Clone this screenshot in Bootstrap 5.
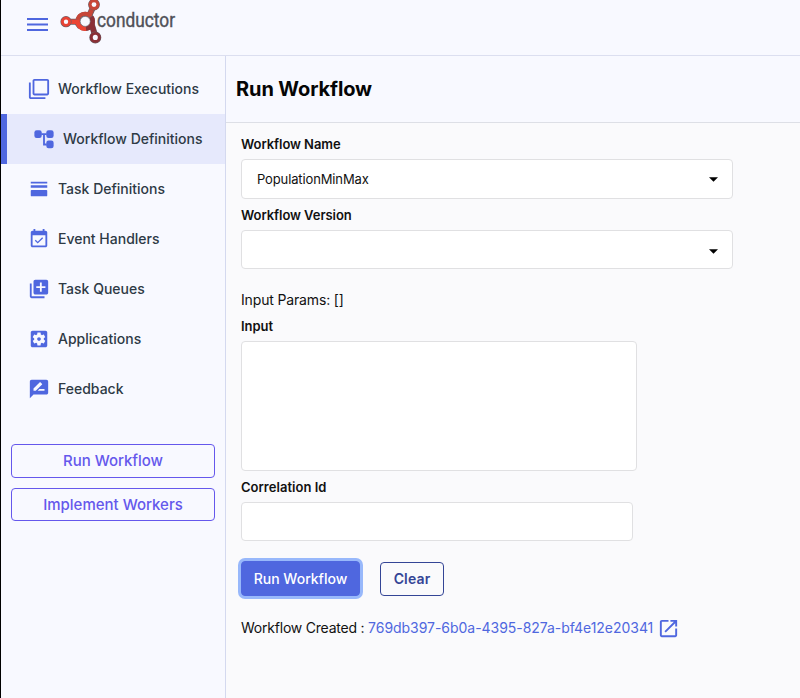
<!DOCTYPE html>
<html lang="en">
<head>
<meta charset="utf-8">
<meta name="viewport" content="width=device-width, initial-scale=1">
<title>Conductor - Run Workflow</title>
<link href="https://cdn.jsdelivr.net/npm/bootstrap@5.3.0/dist/css/bootstrap.min.css" rel="stylesheet">
<style>
body{font-family:Inter,"Liberation Sans",sans-serif;font-size:14px;line-height:20px;color:#111;background:#fafafc;height:698px;border-left:1px solid #000;overflow:hidden}
.topbar{height:56px;background:#f8f9ff;border-bottom:1px solid #dcdff0}
.menu-btn{width:22px;height:16px;margin:1px 11px 0 26px}
.brand-logo{width:120px;height:55px;overflow:visible}
.side{width:225px;background:#f8f9ff;border-right:1px solid #d4d9ef;padding-top:8px}
.side .nav-link{height:50px;padding:0 0 0 27px;gap:8px;color:#2e3a45;font-weight:500;font-size:14px;white-space:nowrap;letter-spacing:0}
.side .nav-link svg{width:22px;height:22px;fill:#4f67df;flex:none}
.side .nav-link.active{background:#e6e9fc;border-left:6px solid #4f67df;padding-left:26px}
.side-actions{padding:30px 10px 0;gap:10px}
.side-btn{--bs-btn-color:#6558ec;--bs-btn-border-color:#6558ec;--bs-btn-padding-y:0;height:34px;font-size:15px;font-weight:500;line-height:20px;border-radius:4px;letter-spacing:-.04px}
.side-btn + .side-btn{height:33px;letter-spacing:0}
.page-title{height:67px;background:#f8f9ff;border-bottom:1px solid #dddfe6;padding-left:10px}
.page-title h1{font-size:20px;font-weight:700;color:#050505;letter-spacing:-.1px}
.run-form{padding:11px 15px}
.form-label{font-size:13px;font-weight:600;line-height:20px;margin:0 0 5px;display:block;letter-spacing:-.06px}
.form-control{border:1px solid #e0e0e2;border-radius:4px;background:#fff;font-size:13px;line-height:20px;color:#111;padding:0 15px}
.pick{width:492px;height:40px;padding-right:14px;letter-spacing:-.13px}
.pick svg{width:9px;height:5px;margin-top:1px}
.version{height:39px;padding-top:2px}
.version-label,.input-label,.corr-label{margin-top:6px}
.corr-label{letter-spacing:.03px}
.params{margin-top:21px;letter-spacing:-.15px}
.input-area{width:396px;height:130px;resize:none}
.corr{width:392px;height:39px}
.btn-run{--bs-btn-color:#fff;--bs-btn-bg:#4f67df;--bs-btn-border-color:#4f67df;width:119px;height:35px;box-shadow:0 0 0 3px #98b8fb}
.btn-clear{--bs-btn-color:#344596;--bs-btn-border-color:#344596;width:64px;height:34px}
.btn-run,.btn-clear{--bs-btn-padding-x:0;--bs-btn-padding-y:0;font-size:14px;font-weight:500;line-height:20px;border-radius:4px}
.btn-clear{font-weight:600;letter-spacing:.15px}
.actions{margin-top:20px;gap:20px}
.created{margin-top:19px}
.created span{letter-spacing:-.22px}
.created a{color:#4f67df;letter-spacing:-.04px}
.created svg{width:23px;height:23px;fill:#4f67df;margin:2px 0 0 4px}
</style>
</head>
<body class="d-flex flex-column">
<header class="topbar d-flex align-items-start flex-shrink-0">
  <svg class="menu-btn mt-3 flex-shrink-0" viewBox="0 0 22 16" aria-label="Menu"><path d="M0 3h21M0 8.500h21M0 14h21" stroke="#4f67df" stroke-width="2"/></svg>
  <svg class="brand-logo" viewBox="60 0 120 55" aria-label="conductor">
    <g fill="none" stroke="#6b5f66" stroke-width="6">
      <path d="M70 21.700H76.500L80.500 27"/><path d="M92.500 8.500L89.500 15"/><path d="M91.500 24L94.500 33.500"/>
      <circle cx="85.200" cy="21.400" r="7.200" stroke-width="5"/>
    </g>
    <g fill="none" stroke-width="4.600">
      <path d="M91.400 17A7.500 7.500 0 0 1 86 28.600" stroke="#8b3036"/>
      <path d="M91.500 23L94.500 34" stroke="#8b3036" stroke-width="5"/>
      <path d="M77.600 19.500A7.500 7.500 0 0 1 90.800 16.600" stroke="#c74638" stroke-width="4"/>
      <path d="M89.200 15.500L92.600 8" stroke="#c74638"/>
      <path d="M70.500 21.700H77.600A7.500 7.500 0 0 0 86 28.700" stroke="#ec4534"/>
    </g>
    <circle cx="85.200" cy="21.400" r="5" fill="#f8f9ff" stroke="#6b5f66" stroke-width=".6"/>
    <g fill="#f8f9ff">
      <circle cx="66" cy="21.700" r="3.600" stroke="#6b5f66" stroke-width="4"/><circle cx="66" cy="21.700" r="3.600" stroke="#e84334" stroke-width="2.800"/>
      <circle cx="94" cy="4.600" r="3.900" stroke="#6b5f66" stroke-width="4"/><circle cx="94" cy="4.600" r="3.900" stroke="#c74638" stroke-width="2.900"/>
      <circle cx="95.300" cy="37.400" r="4" stroke="#6b5f66" stroke-width="4"/><circle cx="95.300" cy="37.400" r="4" stroke="#8b3036" stroke-width="2.900"/>
    </g>
    <text x="97" y="27.200" textLength="78" lengthAdjust="spacingAndGlyphs" font-family="Roboto, sans-serif" font-size="19.500" fill="#505158" stroke="#505158" stroke-width=".4">conductor</text>
  </svg>
</header>
<div class="d-flex flex-grow-1">
  <aside class="side flex-shrink-0">
    <nav class="nav flex-column flex-nowrap">
      <a class="nav-link d-flex align-items-center" href="#"><svg viewBox="0 0 24 24"><path d="M3 5H1v16c0 1.100.9 2 2 2h16v-2H3V5zm18-4H7c-1.100 0-2 .9-2 2v14c0 1.100.9 2 2 2h14c1.100 0 2-.9 2-2V3c0-1.100-.9-2-2-2zm0 16H7V3h14v14z"/></svg>Workflow Executions</a>
      <a class="nav-link active d-flex align-items-center" href="#"><svg viewBox="0 0 24 24"><g><rect x="1.500" y="2.500" width="8" height="8.500" rx="2.500"/><rect x="14.500" y="2.500" width="8" height="8.500" rx="2.500"/><rect x="14.500" y="13.500" width="8" height="8.500" rx="2.500"/><path d="M9 5.700h6v2h-2v9.300h2v2h-4V7.700H9z"/></g></svg>Workflow Definitions</a>
      <a class="nav-link d-flex align-items-center" href="#"><svg viewBox="0 0 24 24"><path d="M3 4h18v2H3zM3 8h18v2.500H3zM4 13h16q1 0 1 1v5q0 1-1 1H4q-1 0-1-1v-5q0-1 1-1z"/></svg>Task Definitions</a>
      <a class="nav-link d-flex align-items-center" href="#"><svg viewBox="0 0 24 24"><path d="M16.530 11.060L15.470 10l-4.880 4.880-2.120-2.120-1.060 1.060L10.590 17l5.940-5.940zM19 3h-1V1h-2v2H8V1H6v2H5c-1.110 0-1.990.9-1.990 2L3 19c0 1.100.89 2 2 2h14c1.100 0 2-.9 2-2V5c0-1.100-.9-2-2-2zm0 16H5V8h14v11z"/></svg>Event Handlers</a>
      <a class="nav-link d-flex align-items-center" href="#"><svg viewBox="0 0 24 24"><path d="M4 6H2v14c0 1.100.9 2 2 2h14v-2H4V6zm16-4H8c-1.100 0-2 .9-2 2v12c0 1.100.9 2 2 2h12c1.100 0 2-.9 2-2V4c0-1.100-.9-2-2-2zm-1 9h-4v4h-2v-4H9V9h4V5h2v4h4v2z"/></svg>Task Queues</a>
      <a class="nav-link d-flex align-items-center" href="#"><svg viewBox="0 0 24 24"><path d="M12 10c-1.100 0-2 .9-2 2s.9 2 2 2 2-.9 2-2-.9-2-2-2zm7-7H5c-1.110 0-2 .9-2 2v14c0 1.100.89 2 2 2h14c1.110 0 2-.9 2-2V5c0-1.100-.89-2-2-2zm-1.750 9c0 .23-.02.46-.05.68l1.480 1.160c.13.11.17.3.08.45l-1.400 2.420c-.09.15-.27.21-.43.15l-1.740-.7c-.36.28-.76.51-1.180.69l-.26 1.850c-.03.17-.18.3-.35.3h-2.800c-.17 0-.32-.13-.35-.29l-.26-1.850c-.43-.18-.82-.41-1.180-.69l-1.740.7c-.16.06-.34 0-.43-.15l-1.400-2.420c-.09-.15-.05-.34.08-.45l1.480-1.160c-.03-.23-.05-.46-.05-.69 0-.23.02-.46.05-.68l-1.480-1.160c-.13-.11-.17-.3-.08-.45l1.400-2.420c.09-.15.27-.21.43-.15l1.740.7c.36-.28.76-.51 1.180-.69l.26-1.850c.03-.17.18-.3.35-.3h2.800c.17 0 .32.13.35.29l.26 1.850c.43.18.82.41 1.180.69l1.740-.7c.16-.06.34 0 .43.15l1.400 2.420c.09.15.05.34-.08.45l-1.480 1.160c.03.23.05.46.05.69z"/></svg>Applications</a>
      <a class="nav-link d-flex align-items-center" href="#"><svg viewBox="0 0 24 24"><path d="M20 2H4c-1.100 0-1.990.9-1.990 2L2 22l4-4h14c1.100 0 2-.9 2-2V4c0-1.100-.9-2-2-2zM6 14v-2.470l6.880-6.880c.2-.2.510-.2.710 0l1.770 1.770c.2.200.2.510 0 .710L8.470 14H6zm12 0h-7.500l2-2H18v2z"/></svg>Feedback</a>
    </nav>
    <div class="side-actions d-flex flex-column">
      <button class="btn side-btn">Run Workflow</button>
      <button class="btn side-btn">Implement Workers</button>
    </div>
  </aside>
  <main class="flex-grow-1">
    <div class="page-title d-flex align-items-center"><h1 class="m-0">Run Workflow</h1></div>
    <div class="run-form">
      <label class="form-label">Workflow Name</label>
      <div class="form-control pick d-flex align-items-center justify-content-between">PopulationMinMax<svg viewBox="0 0 10 5"><path d="M0 0h10L5 5z"/></svg></div>
      <label class="form-label version-label">Workflow Version</label>
      <div class="form-control pick version d-flex align-items-center justify-content-end"><svg viewBox="0 0 10 5"><path d="M0 0h10L5 5z"/></svg></div>
      <div class="params">Input Params: []</div>
      <label class="form-label input-label" for="input">Input</label>
      <textarea class="form-control input-area" id="input"></textarea>
      <label class="form-label corr-label" for="corr">Correlation Id</label>
      <input class="form-control corr" id="corr" type="text">
      <div class="actions d-flex align-items-center"><button class="btn btn-run">Run Workflow</button><button class="btn btn-clear">Clear</button></div>
      <div class="created d-flex align-items-center"><span>Workflow Created :&nbsp;</span><a class="text-decoration-none" href="#">769db397-6b0a-4395-827a-bf4e12e20341</a><svg viewBox="0 0 24 24"><path d="M19 19H5V5h7V3H5c-1.110 0-2 .9-2 2v14c0 1.100.89 2 2 2h14c1.100 0 2-.9 2-2v-7h-2v7zM14 3v2h3.590l-9.830 9.830 1.410 1.410L19 6.410V10h2V3h-7z"/></svg></div>
    </div>
  </main>
</div>
<script src="https://cdn.jsdelivr.net/npm/bootstrap@5.3.0/dist/js/bootstrap.bundle.min.js"></script>
</body>
</html>
